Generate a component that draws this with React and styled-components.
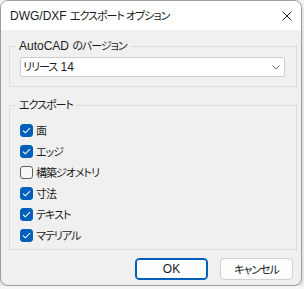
import React from 'react'
import styled, { createGlobalStyle } from 'styled-components';

const GlobalStyle = createGlobalStyle`
    html, body {
        margin: 0;
        padding: 0;
        background: #f6f6f6;
    }
    body {
        font-family: "Segoe UI", "Liberation Sans", "Noto Sans CJK JP", sans-serif;
        font-size: 12px;
        font-feature-settings: "palt";
        color: #1b1b1b;
    }
`;

// Japanese runs: Noto kana are wider than the UI font in the reference
const Jp = styled.span`
    font-size: 11px;
    letter-spacing: -1px;
`;

const Window = styled.div`
    width: 302px;
    height: 286px;
    box-sizing: border-box;
    border: 1px solid #9c9c9c;
    border-radius: 8px;
    background: #f0f0f0;
    overflow: hidden;
    display: flex;
    flex-direction: column;
    box-shadow: 0 2px 6px rgba(0, 0, 0, 0.18);
`;

const TitleBar = styled.div`
    height: 29px;
    flex: 0 0 auto;
    background: #ffffff;
    display: flex;
    align-items: center;
    padding: 0 8px 0 9px;
`;

const Title = styled.div`
    flex: 1 1 auto;
    font-size: 12px;
    line-height: 14px;
    margin-top: 1px;
`;

const CloseButton = styled.div`
    width: 10px;
    height: 10px;
    margin-right: 1px;
    display: flex;
`;

const Body = styled.div`
    flex: 1 1 auto;
    padding: 9px 4px 0 8px;
    display: flex;
    flex-direction: column;
`;

const Group = styled.fieldset`
    margin: 0 0 ${({gap}) => gap || 0}px 0;
    padding: ${({pad}) => pad};
    border: 1px solid #dcdcdc;
    min-width: 0;
`;

const Legend = styled.legend`
    padding: 0 3px;
    margin-left: -4px;
    font-size: 12px;
    line-height: 14px;
`;

const Select = styled.div`
    height: 20px;
    box-sizing: border-box;
    width: 265px;
    background: #ffffff;
    border: 1px solid #cfcfcf;
    border-radius: 2px;
    display: flex;
    align-items: center;
    padding: 0 4px 0 2px;
    justify-content: space-between;
`;

const SelectText = styled.span`
    line-height: 14px;
`;

const Row = styled.div`
    height: 21px;
    display: flex;
    align-items: center;
    gap: 3px;
`;

const Box = styled.div`
    width: 13px;
    height: 13px;
    box-sizing: border-box;
    border-radius: 3px;
    display: flex;
    align-items: center;
    justify-content: center;
    background: ${({checked}) => checked ? '#005fb8' : '#f7f7f7'};
    border: 1px solid ${({checked}) => checked ? '#005fb8' : '#616161'};
`;

const Label = styled.span`
    line-height: 14px;
    font-size: 11px;
    letter-spacing: -1px;
`;

const Buttons = styled.div`
    display: flex;
    justify-content: flex-end;
    gap: 12px;
    padding: 8px 4px 0 0;
`;

const Button = styled.div`
    width: 73px;
    height: 22px;
    box-sizing: border-box;
    border-radius: 4px;
    background: #fdfdfd;
    border: 1px solid ${({primary}) => primary ? '#005fb8' : '#d0d0d0'};
    box-shadow: ${({primary}) => primary ? 'inset 0 0 0 1px #005fb8' : 'none'};
    display: flex;
    align-items: center;
    justify-content: center;
    font-size: 12px;
`;

const options = [
    {label: '面', checked: true},
    {label: 'エッジ', checked: true},
    {label: '構築ジオメトリ', checked: false},
    {label: '寸法', checked: true},
    {label: 'テキスト', checked: true},
    {label: 'マテリアル', checked: true},
];

function Check() {
    return (
        <svg width="9" height="7" viewBox="0 0 9 7">
            <path d="M1 3.6 L3.3 5.8 L8 1.2" fill="none" stroke="#fff" strokeWidth="1.1" />
        </svg>
    )
}

function App() {
    return (
        <React.Fragment>
            <GlobalStyle />
            <Window>
                <TitleBar>
                    <Title>DWG/DXF <Jp>エクスポート オプション</Jp></Title>
                    <CloseButton>
                        <svg width="10" height="10" viewBox="0 0 10 10">
                            <path d="M0.5 0.5 L9.5 9.5 M9.5 0.5 L0.5 9.5" stroke="#1b1b1b" strokeWidth="1" />
                        </svg>
                    </CloseButton>
                </TitleBar>
                <Body>
                    <Group gap={11} pad="4px 10px 9px 10px">
                        <Legend>AutoCAD <Jp>のバージョン</Jp></Legend>
                        <Select>
                            <SelectText><Jp>リリース</Jp> 14</SelectText>
                            <svg width="8" height="5" viewBox="0 0 8 5">
                                <path d="M0.5 0.5 L4 4 L7.5 0.5" fill="none" stroke="#6a6a6a" strokeWidth="1" />
                            </svg>
                        </Select>
                    </Group>
                    <Group pad="8px 10px 3px 10px">
                        <Legend><Jp>エクスポート</Jp></Legend>
                        {options.map((o) => (
                            <Row key={o.label}>
                                <Box checked={o.checked}>{o.checked && <Check />}</Box>
                                <Label>{o.label}</Label>
                            </Row>
                        ))}
                    </Group>
                    <Buttons>
                        <Button primary>OK</Button>
                        <Button><Jp>キャンセル</Jp></Button>
                    </Buttons>
                </Body>
            </Window>
        </React.Fragment>
    )
}

export default App
